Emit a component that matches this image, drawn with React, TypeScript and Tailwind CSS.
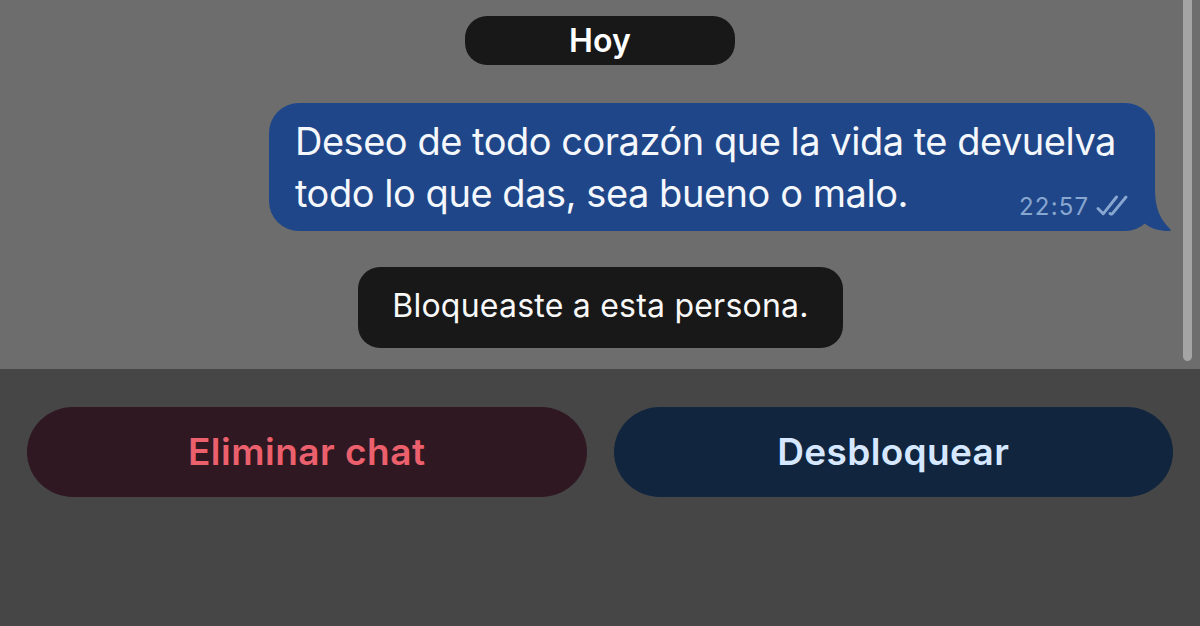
function DoubleCheck() {
  return (
    <svg className="h-[22px] w-8" viewBox="0 0 32 22" fill="none" stroke="#87a6d0" strokeWidth="2.9" strokeLinejoin="round" strokeLinecap="round">
      <path d="M2 13.500 L7.200 18.800 L20.500 2" />
      <path d="M14 18.500 Q15.600 19.600 16.600 18.400 L30 2" />
    </svg>
  );
}

function Message() {
  return (
    <div className="relative ml-[269px] mt-[38px] h-32 w-[886px] rounded-[30px] bg-[#1f4688] pl-[26px] pt-[13px]">
      <svg className="absolute bottom-0 left-[850px] h-[64px] w-[54px]" viewBox="0 0 54 64" fill="#1f4688">
        <path d="M36 0 V22 C36 42 41 52 51.500 62.500 Q52.500 64 50 64 C41 64 32 62 25 56 L0 40 V0 Z" />
      </svg>
      <p className="relative whitespace-nowrap text-[38px] leading-[51.500px] text-[#f4f7fc]">
        <span className="block tracking-[-0.48px]">Deseo de todo corazón que la vida te devuelva</span>
        <span className="block tracking-[-0.46px]">todo lo que das, sea bueno o malo.</span>
      </p>
      <div className="absolute left-[750px] top-[90px] flex h-[26px] items-center whitespace-nowrap text-[#87a6d0]">
        <span className="w-[77px] pt-px text-[24px] leading-[26px] tracking-[1.200px]">22:57</span>
        <DoubleCheck />
      </div>
    </div>
  );
}

export default function App() {
  return (
    <div className="flex h-[626px] w-[1200px] flex-col overflow-hidden bg-[#464646] font-['Inter',sans-serif]">
      <main className="relative h-[369px] shrink-0 bg-[#6d6d6d] pt-4">
        <div className="mx-auto flex h-[49px] w-[270px] items-center justify-center rounded-[22px] bg-[#181818] text-[32px] font-semibold tracking-[0.2px] text-white">
          Hoy
        </div>
        <Message />
        <div className="ml-[358px] mt-9 flex h-[81px] w-[485px] items-center justify-center rounded-[22px] bg-[#181818] pb-1 text-[32px] tracking-[0.220px] text-[#f8f8f8]">
          <span className="whitespace-nowrap">Bloqueaste a esta persona.</span>
        </div>
        <div className="absolute -top-3 left-[1183px] h-[373px] w-[9px] rounded-full bg-[#a4a4a4]" />
      </main>
      <footer className="flex gap-[27px] px-[27px] pt-[38px]">
        <button className="h-[90px] flex-1 rounded-[46px/45px] bg-[#2f1822] text-[37px] font-semibold tracking-[0.5px] text-[#eb606c]">
          Eliminar chat
        </button>
        <button className="h-[90px] flex-1 rounded-[46px/45px] bg-[#11253f] text-[37px] font-semibold tracking-[0.35px] text-[#d6e8ff]">
          Desbloquear
        </button>
      </footer>
    </div>
  );
}
